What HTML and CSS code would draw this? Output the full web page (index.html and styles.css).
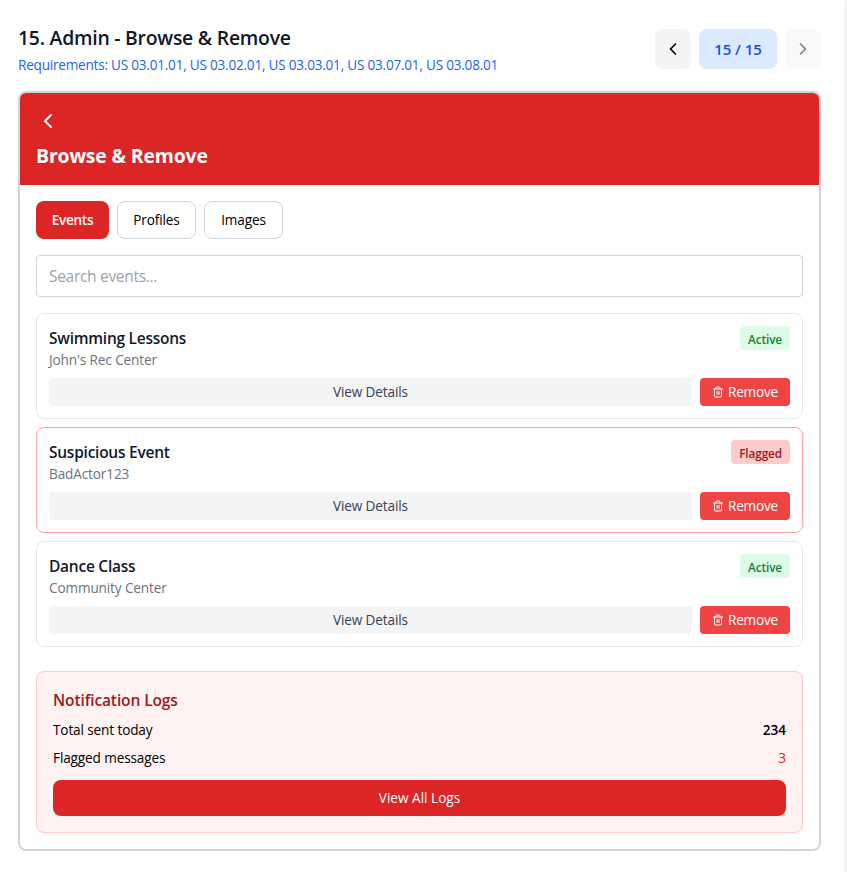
FILE: index.html
```html
<!DOCTYPE html>
<html lang="en">
<head>
<meta charset="utf-8">
<title>Admin - Browse &amp; Remove</title>
<link rel="stylesheet" href="styles.css">
</head>
<body>
<svg width="0" height="0" class="defs">
  <symbol id="left" viewBox="0 0 24 24"><path d="m15 18-6-6 6-6"/></symbol>
  <symbol id="right" viewBox="0 0 24 24"><path d="m9 18 6-6-6-6"/></symbol>
  <symbol id="trash" viewBox="0 0 24 24"><path d="M3 6h18M19 6v14a2 2 0 0 1-2 2H7a2 2 0 0 1-2-2V6M8 6V4a2 2 0 0 1 2-2h4a2 2 0 0 1 2 2v2M10 11v6M14 11v6"/></symbol>
</svg>
<main class="panel">
  <header class="top">
    <div>
      <h1 class="title">15. Admin - Browse &amp; Remove</h1>
      <p class="reqs">Requirements: US 03.01.01, US 03.02.01, US 03.03.01, US 03.07.01, US 03.08.01</p>
    </div>
    <nav class="pager">
      <button class="step"><svg class="icon"><use href="#left"/></svg></button>
      <span class="count">15 / 15</span>
      <button class="step off"><svg class="icon"><use href="#right"/></svg></button>
    </nav>
  </header>
  <section class="screen">
    <div class="banner">
      <button class="back"><svg class="icon"><use href="#left"/></svg></button>
      <h2 class="banner-title">Browse &amp; Remove</h2>
    </div>
    <div class="content">
      <div class="tabs">
        <button class="tab active">Events</button>
        <button class="tab">Profiles</button>
        <button class="tab">Images</button>
      </div>
      <input class="search" placeholder="Search events...">
      <div class="list">
        <article class="card">
          <div class="row"><div><h3 class="name">Swimming Lessons</h3><p class="host">John's Rec Center</p></div><span class="badge">Active</span></div>
          <div class="actions"><button class="view">View Details</button><button class="remove"><svg class="icon"><use href="#trash"/></svg><span>Remove</span></button></div>
        </article>
        <article class="card flagged">
          <div class="row"><div><h3 class="name">Suspicious Event</h3><p class="host">BadActor123</p></div><span class="badge">Flagged</span></div>
          <div class="actions"><button class="view">View Details</button><button class="remove"><svg class="icon"><use href="#trash"/></svg><span>Remove</span></button></div>
        </article>
        <article class="card">
          <div class="row"><div><h3 class="name">Dance Class</h3><p class="host">Community Center</p></div><span class="badge">Active</span></div>
          <div class="actions"><button class="view">View Details</button><button class="remove"><svg class="icon"><use href="#trash"/></svg><span>Remove</span></button></div>
        </article>
      </div>
      <section class="logs">
        <h3 class="logs-title">Notification Logs</h3>
        <div class="stat"><span>Total sent today</span><b>234</b></div>
        <div class="stat"><span>Flagged messages</span><b class="red">3</b></div>
        <button class="all">View All Logs</button>
      </section>
    </div>
  </section>
</main>
</body>
</html>
```
FILE: styles.css
```css
* { box-sizing: border-box; margin: 0; padding: 0; }
body {
  background: #f3f4f6;
  font-family: "Open Sans", "Noto Sans", sans-serif;
  font-size: 13.6px;
  line-height: 20px;
  letter-spacing: -0.13px;
  color: #000;
  overflow: hidden;
}
button, input { font: inherit; letter-spacing: inherit; color: inherit; border: 0; background: none; }
.defs { display: block; }
.icon { display: block; width: 20px; height: 20px; fill: none; stroke: currentColor; stroke-width: 2; stroke-linecap: round; stroke-linejoin: round; }
.panel { width: 844px; height: 872px; padding: 23px 23px 0 18px; background: #fff; box-shadow: 0 10px 8px rgba(0,0,0,.03); }
.top { display: flex; justify-content: space-between; align-items: center; margin-bottom: 16px; }
.title { padding-top: 2px; font-size: 19.4px; line-height: 26px; font-weight: 600; color: #111827; letter-spacing: -0.24px; white-space: nowrap; }
.reqs { margin-top: 4px; font-size: 13.6px; color: #2563eb; letter-spacing: -0.23px; white-space: nowrap; }
.pager { display: flex; gap: 8px; }
.step { width: 36px; height: 40px; padding: 8px; border-radius: 8px; background: #f3f4f6; display: flex; align-items: center; }
.off { opacity: .5; }
.count { width: 78px; height: 40px; border-radius: 8px; background: #dbeafe; color: #1d4ed8; font-size: 15px; font-weight: 600; line-height: 41px; text-align: center; letter-spacing: -0.1px; }
.screen { border: 2px solid #d1d5db; border-radius: 8px; overflow: hidden; }
.banner { padding: 16px; background: #dc2626; color: #fff; }
.back { display: block; margin-bottom: 8px; }
.back .icon { width: 24px; height: 24px; }
.banner-title { padding-top: 2px; font-size: 19.4px; line-height: 26px; font-weight: 700; letter-spacing: -0.15px; }
.content { padding: 16px; }
.tabs { display: flex; gap: 8px; margin-bottom: 16px; }
.tab { width: 79px; height: 38px; border: 1px solid #d1d5db; border-radius: 8px; }
.active { width: 73px; background: #dc2626; border: 0; color: #fff; font-weight: 600; letter-spacing: -0.3px; }
.search { display: block; width: 100%; height: 42px; padding: 8px 12px; border: 1px solid #d1d5db; border-radius: 4px; font-size: 15.5px; letter-spacing: -0.3px; margin-bottom: 16px; }
.search::placeholder { color: #9ca3af; }
.list { display: grid; gap: 8px; margin-bottom: 24px; }
.card { padding: 12px; border: 1px solid #e5e7eb; border-radius: 8px; }
.flagged { border-color: #fca5a5; }
.row { display: flex; justify-content: space-between; align-items: flex-start; margin-bottom: 8px; }
.name { padding-top: 1px; font-size: 15.5px; line-height: 23px; font-weight: 600; color: #111827; letter-spacing: -0.25px; }
.host { color: #6b7280; }
.badge { padding: 5px 8px 3px; border-radius: 4px; font-size: 11.8px; line-height: 16px; font-weight: 600; letter-spacing: -0.12px; background: #dcfce7; color: #15803d; }
.flagged .badge { background: #fecaca; color: #991b1b; }
.actions { display: flex; gap: 8px; }
.view { flex: 1; height: 28px; border-radius: 4px; background: #f3f4f6; color: #374151; }
.remove { width: 90px; height: 28px; padding: 0 12px; border-radius: 4px; background: #ef4444; color: #fff; display: flex; align-items: center; gap: 4px; letter-spacing: -0.2px; }
.remove .icon { width: 12px; height: 12px; }
.logs { padding: 16px; border: 1px solid #fecaca; border-radius: 8px; background: #fef2f2; }
.logs-title { padding-top: 1px; font-size: 15.5px; line-height: 23px; font-weight: 600; letter-spacing: -0.1px; color: #991b1b; margin-bottom: 8px; }
.stat { display: flex; justify-content: space-between; margin-bottom: 8px; }
.stat b { font-weight: 600; letter-spacing: 0; }
.stat .red { color: #dc2626; font-weight: 500; }
.all { display: block; width: 100%; height: 36px; margin-top: 12px; border-radius: 8px; background: #dc2626; color: #fff; letter-spacing: 0; }
```
